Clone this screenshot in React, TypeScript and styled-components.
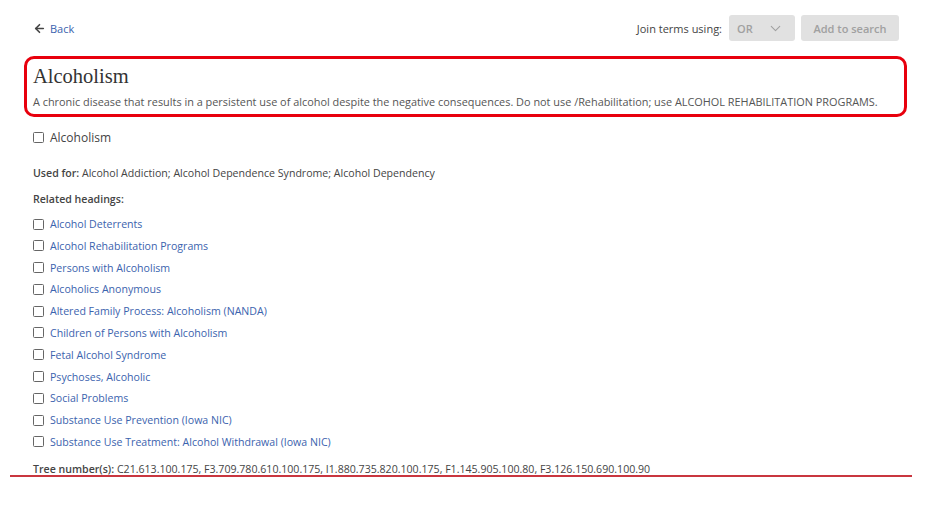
import { ArrowLeft, ChevronDown } from "lucide-react";
import styled, { createGlobalStyle } from "styled-components";

const related = [
  "Alcohol Deterrents",
  "Alcohol Rehabilitation Programs",
  "Persons with Alcoholism",
  "Alcoholics Anonymous",
  "Altered Family Process: Alcoholism (NANDA)",
  "Children of Persons with Alcoholism",
  "Fetal Alcohol Syndrome",
  "Psychoses, Alcoholic",
  "Social Problems",
  "Substance Use Prevention (Iowa NIC)",
  "Substance Use Treatment: Alcohol Withdrawal (Iowa NIC)",
];

const treeNumbers = [
  "C21.613.100.175",
  "F3.709.780.610.100.175",
  "I1.880.735.820.100.175",
  "F1.145.905.100.80",
  "F3.126.150.690.100.90",
];

export default function App() {
  return (
    <>
      <GlobalStyle />
      <Page>
        <TopBar>
          <BackLink href="#">
            <ArrowLeft size={13} strokeWidth={3} color="#444" />
            Back
          </BackLink>
          <Controls>
            <JoinLabel>Join terms using:</JoinLabel>
            <Select>
              OR
              <ChevronDown size={17} strokeWidth={1.5} color="#a0a0a0" />
            </Select>
            <AddButton disabled>Add to search</AddButton>
          </Controls>
        </TopBar>

        <Highlight>
          <Title>Alcoholism</Title>
          <Description>
            A chronic disease that results in a persistent use of alcohol despite the negative
            consequences. Do not use /Rehabilitation; use ALCOHOL REHABILITATION PROGRAMS.
          </Description>
        </Highlight>

        <MainTerm>
          <Box />
          Alcoholism
        </MainTerm>

        <InfoLine>
          <Label>Used for:</Label> Alcohol Addiction; Alcohol Dependence Syndrome; Alcohol
          Dependency
        </InfoLine>

        <SectionLabel>Related headings:</SectionLabel>

        <RelatedList>
          {related.map((item) => (
            <RelatedItem key={item}>
              <Box />
              <TermLink href="#">{item}</TermLink>
            </RelatedItem>
          ))}
        </RelatedList>

        <TreeLine>
          <Label>Tree number(s):</Label> {treeNumbers.join(", ")}
          <Underline />
        </TreeLine>
      </Page>
    </>
  );
}

const GlobalStyle = createGlobalStyle`
  body {
    margin: 0;
    background: #fff;
    font-family: "Open Sans", "Noto Sans", sans-serif;
    color: #444;
  }
`;

const Page = styled.div`
  padding: 15px 34px 0 33px;
`;

const TopBar = styled.div`
  display: flex;
  justify-content: space-between;
  align-items: center;
  height: 26px;
`;

const BackLink = styled.a`
  display: flex;
  align-items: center;
  gap: 4px;
  font-size: 11px;
  color: #3b63ae;
  text-decoration: none;
`;

const Controls = styled.div`
  display: flex;
  align-items: center;
`;

const JoinLabel = styled.span`
  font-size: 11px;
  color: #444;
  margin-right: 7px;
`;

const Select = styled.div`
  display: flex;
  align-items: center;
  justify-content: space-between;
  width: 66px;
  height: 26px;
  box-sizing: border-box;
  padding: 0 11px 0 8px;
  background: #e1e1e1;
  border-radius: 3px;
  font-size: 11px;
  font-weight: 600;
  color: #a0a0a0;
`;

const AddButton = styled.button`
  margin-left: 6px;
  width: 98px;
  height: 26px;
  border: none;
  border-radius: 3px;
  background: #e1e1e1;
  font-family: inherit;
  font-size: 11px;
  font-weight: 600;
  color: #a0a0a0;
  padding: 0;
`;

const Highlight = styled.div`
  margin: 15px -8px 0 -9px;
  border: 3px solid #e8000d;
  border-radius: 10px;
  padding: 5px 6px 4px 6px;
`;

const Title = styled.h1`
  margin: 0;
  font-family: "Liberation Serif", "DejaVu Serif", serif;
  font-weight: 400;
  font-size: 20.5px;
  line-height: 24px;
  color: #333;
`;

const Description = styled.p`
  margin: 6px 0 0;
  font-size: 10.9px;
  line-height: 16px;
  color: #555;
`;

const Box = styled.span`
  display: inline-block;
  flex: none;
  width: 9px;
  height: 9px;
  border: 1px solid #666;
  border-radius: 1.5px;
  background: #fff;
`;

const MainTerm = styled.label`
  display: flex;
  align-items: center;
  gap: 6px;
  margin-top: 11px;
  height: 18px;
  font-size: 12px;
  color: #444;
`;

const InfoLine = styled.div`
  margin-top: 19px;
  font-size: 10.6px;
  line-height: 16px;
  color: #444;
`;

const Label = styled.b`
  font-weight: 600;
  color: #444;
`;

const SectionLabel = styled.div`
  margin-top: 10px;
  font-size: 10.6px;
  line-height: 16px;
  font-weight: 600;
  color: #444;
`;

const RelatedList = styled.ul`
  list-style: none;
  margin: 9px 0 0;
  padding: 0;
  display: grid;
  row-gap: 5.8px;
`;

const RelatedItem = styled.li`
  display: flex;
  align-items: center;
  gap: 6px;
  height: 16px;
`;

const TermLink = styled.a`
  font-size: 10.6px;
  color: #3b63ae;
  text-decoration: none;
`;

const TreeLine = styled.div`
  position: relative;
  margin-top: 11px;
  font-size: 10.6px;
  line-height: 16px;
  color: #444;
`;

const Underline = styled.span`
  position: absolute;
  left: -23px;
  top: 14px;
  width: 902px;
  height: 2px;
  background: #c9363f;
`;
